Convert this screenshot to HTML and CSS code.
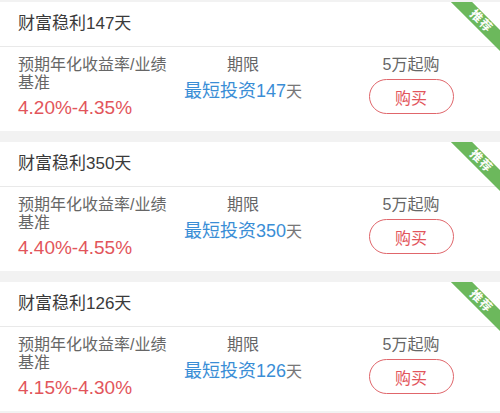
FILE: index.html
```html
<!DOCTYPE html>
<html lang="zh-CN">
<head>
<meta charset="utf-8">
<link rel="stylesheet" href="styles.css">
</head>
<body>
<div class="list">
  <div class="card">
    <div class="ribbon">推荐</div>
    <div class="title">财富稳利147天</div>
    <div class="body">
      <div class="col-left">
        <div class="label">预期年化收益率/业绩基准</div>
        <div class="rate">4.20%-4.35%</div>
      </div>
      <div class="col-mid">
        <div class="label">期限</div>
        <div class="term"><span class="term-main">最短投资147</span><span class="term-unit">天</span></div>
      </div>
      <div class="col-right">
        <div class="label">5万起购</div>
        <button class="buy">购买</button>
      </div>
    </div>
  </div>
  <div class="card">
    <div class="ribbon">推荐</div>
    <div class="title">财富稳利350天</div>
    <div class="body">
      <div class="col-left">
        <div class="label">预期年化收益率/业绩基准</div>
        <div class="rate">4.40%-4.55%</div>
      </div>
      <div class="col-mid">
        <div class="label">期限</div>
        <div class="term"><span class="term-main">最短投资350</span><span class="term-unit">天</span></div>
      </div>
      <div class="col-right">
        <div class="label">5万起购</div>
        <button class="buy">购买</button>
      </div>
    </div>
  </div>
  <div class="card">
    <div class="ribbon">推荐</div>
    <div class="title">财富稳利126天</div>
    <div class="body">
      <div class="col-left">
        <div class="label">预期年化收益率/业绩基准</div>
        <div class="rate">4.15%-4.30%</div>
      </div>
      <div class="col-mid">
        <div class="label">期限</div>
        <div class="term"><span class="term-main">最短投资126</span><span class="term-unit">天</span></div>
      </div>
      <div class="col-right">
        <div class="label">5万起购</div>
        <button class="buy">购买</button>
      </div>
    </div>
  </div>
</div>
</body>
</html>
```
FILE: styles.css
```css
html, body {
  margin: 0;
  padding: 0;
  background: #f2f2f2;
}
body {
  font-family: "Liberation Sans", "Noto Sans CJK SC", sans-serif;
  width: 500px;
  height: 413px;
  overflow: hidden;
}
.list {
  padding-top: 2px;
  display: flex;
  flex-direction: column;
  gap: 11px;
}
.card {
  position: relative;
  background: #ffffff;
  height: 129px;
  overflow: hidden;
}
.ribbon {
  position: absolute;
  width: 80px;
  height: 15px;
  line-height: 15px;
  right: -20.5px;
  top: 12px;
  transform: rotate(45deg);
  background: #6cb85c;
  color: #ffffff;
  font-size: 12px;
  font-weight: bold;
  text-align: center;
  letter-spacing: 1px;
}
.title {
  height: 44px;
  line-height: 44px;
  padding-left: 18px;
  font-size: 17px;
  color: #3a3a3a;
  border-bottom: 1px solid #e9e9e9;
}
.body {
  display: flex;
  padding: 9px 0 0 18px;
}
.label {
  font-size: 16px;
  line-height: 18px;
  color: #666666;
}
.col-left {
  width: 155px;
}
.rate {
  margin-top: 5px;
  font-size: 19px;
  line-height: 22px;
  color: #e2555b;
}
.col-mid {
  width: 140px;
  text-align: center;
}
.term {
  margin-top: 6px;
  line-height: 22px;
}
.term-main {
  font-size: 18px;
  color: #3a8ed6;
}
.term-unit {
  font-size: 16px;
  color: #777777;
}
.col-right {
  margin-left: 33px;
  width: 130px;
  display: flex;
  flex-direction: column;
  align-items: center;
}
.buy {
  margin-top: 5px;
  width: 85px;
  height: 35px;
  border: 1.5px solid #e0666b;
  border-radius: 18px;
  background: #ffffff;
  color: #e2555b;
  font-family: inherit;
  font-size: 16px;
  padding: 0;
}
```
